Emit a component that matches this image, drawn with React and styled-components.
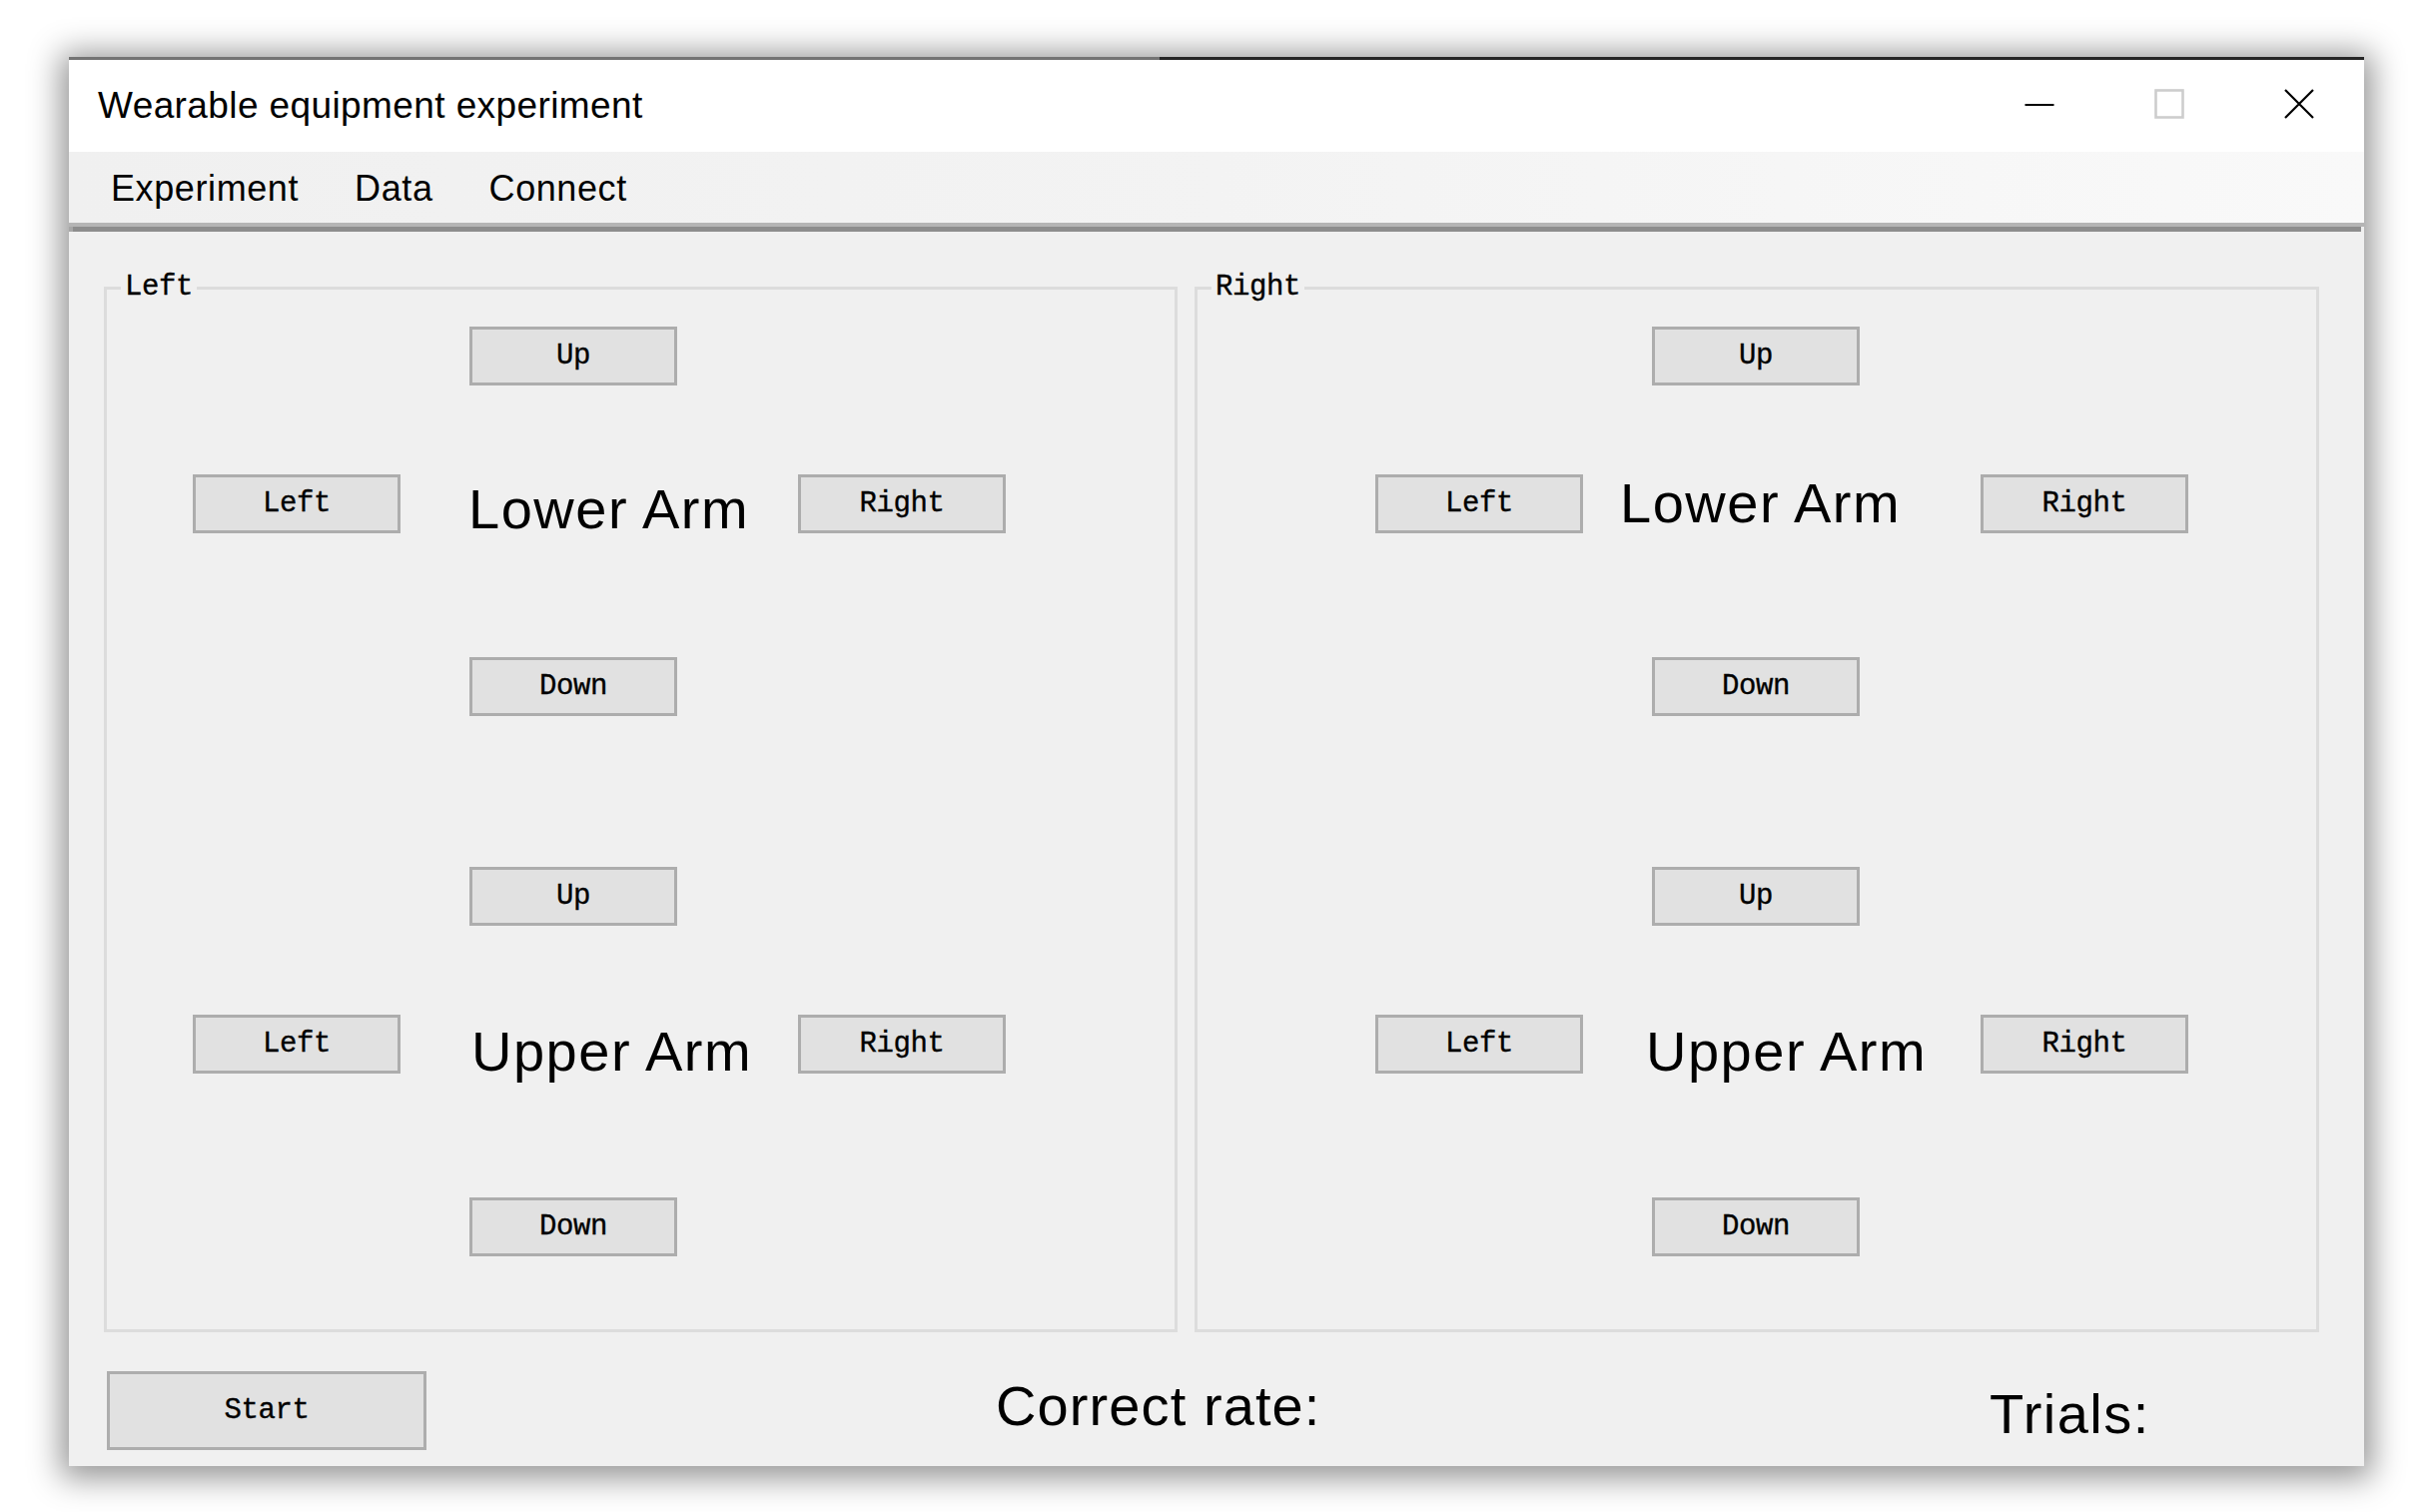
import React from "react";
import styled, { createGlobalStyle } from "styled-components";

const GlobalStyle = createGlobalStyle`
  html, body {
    margin: 0;
    padding: 0;
    background: #ffffff;
    overflow: hidden;
  }
  body {
    width: 2426px;
    height: 1514px;
    font-family: "Liberation Sans", Arial, sans-serif;
  }
  *, *::before, *::after { box-sizing: border-box; }
`;

const UI_FONT = `"Liberation Sans", Arial, sans-serif`;
const DIALOG_FONT = `"Liberation Mono", "Courier New", monospace`;

const Desk = styled.div`
  padding: 57px 0 0 69px;
`;

const Window = styled.div`
  width: 2298px;
  height: 1411px;
  display: flex;
  flex-direction: column;
  background: #f0f0f0;
  box-shadow: 0 4px 30px 8px rgba(0, 0, 0, 0.42);
`;

/* active-frame top edge: lighter on the left, dark on the right */
const FrameEdge = styled.div`
  height: 3px;
  background: linear-gradient(to right, #737373 0 47.5%, #262626 47.5% 100%);
`;

const TitleBar = styled.div`
  height: 92px;
  display: flex;
  align-items: center;
  background: #ffffff;
  padding-left: 29px;
`;

const Title = styled.span`
  font-family: ${UI_FONT};
  font-size: 37px;
  letter-spacing: 0.4px;
  color: #000;
  white-space: nowrap;
`;

const Controls = styled.div`
  margin-left: auto;
  align-self: stretch;
  display: flex;
  padding-bottom: 5px;
`;

const CtrlButton = styled.div`
  width: 130px;
  display: flex;
  align-items: center;
  justify-content: center;
`;

const MenuBar = styled.div`
  height: 75px;
  display: flex;
  align-items: center;
  padding: 3px 0 0 14px;
  background: linear-gradient(to right, #f0f0f0 0%, #f3f3f3 50%, #f9f9f9 100%);
  border-bottom: 4px solid #b5b5b5;
`;

const MenuItem = styled.span`
  font-family: ${UI_FONT};
  font-size: 36px;
  letter-spacing: 0.6px;
  color: #000;
  padding: 0 28px;
`;

/* sunken edge of the client area under the menu */
const ClientEdge = styled.div`
  height: 5px;
  background: linear-gradient(
    to right,
    #a6a6a6 0 4px,
    #8d8d8d 4px calc(100% - 3px),
    #f0f0f0 calc(100% - 3px) 100%
  );
`;

const Client = styled.div`
  flex: 1;
  display: flex;
  flex-direction: column;
  padding: 40px 0 0 35px;
  background: #f0f0f0;
`;

const Groups = styled.div`
  display: flex;
  gap: 17px;
`;

const GroupBox = styled.fieldset`
  width: ${(p) => p.$width}px;
  height: 1062px;
  margin: 0;
  min-width: 0;
  padding: 23px 0 0 0;
  border: 3px solid #dcdcdc;
`;

const Legend = styled.legend`
  margin-left: 14px;
  padding: 0 4px;
  font-family: ${DIALOG_FONT};
  font-size: 29px;
  letter-spacing: -0.4px;
  line-height: 32px;
  color: #000;
  -webkit-text-stroke: 0.35px #000;
`;

const Pad = styled.div`
  display: grid;
  grid-template-columns: 208px 398px 208px;
  grid-template-rows: 59px 89px 59px 124px 59px;
  grid-template-areas:
    ".    up    ."
    ".    .     ."
    "left label right"
    ".    .     ."
    ".    down  .";
  margin-left: ${(p) => p.$indent}px;
  margin-top: ${(p) => p.$top || 0}px;
`;

const WinButton = styled.button`
  grid-area: ${(p) => p.$area || "auto"};
  width: ${(p) => p.$w || 208}px;
  height: ${(p) => p.$h || 59}px;
  margin: 0 0 0 ${(p) => p.$offset || 0}px;
  padding: 0;
  border: 3px solid #adadad;
  background: #e1e1e1;
  font-family: ${DIALOG_FONT};
  font-size: 29px;
  letter-spacing: -0.4px;
  color: #000;
  -webkit-text-stroke: 0.35px #000;
  cursor: default;
  white-space: nowrap;
`;

const PartLabel = styled.div`
  grid-area: label;
  align-self: center;
  margin-left: ${(p) => p.$indent}px;
  transform: translateY(${(p) => p.$shift}px);
  font-family: ${UI_FONT};
  font-size: 56px;
  line-height: 56px;
  letter-spacing: 1.5px;
  color: #000;
  white-space: nowrap;
`;

const BottomBar = styled.div`
  display: grid;
  grid-template-columns: 890px 995px auto;
  align-items: start;
  margin-top: 39px;
  padding-left: 3px;
`;

const Readout = styled.div`
  margin-top: ${(p) => p.$drop}px;
  font-family: ${UI_FONT};
  font-size: 56px;
  line-height: 64px;
  letter-spacing: ${(p) => p.$track}px;
  color: #000;
  white-space: nowrap;
`;

const MinimizeGlyph = () => (
  <svg width="30" height="30" viewBox="0 0 30 30">
    <path d="M0.5 16H29.5" stroke="#000" strokeWidth="2" />
  </svg>
);

const MaximizeGlyph = () => (
  <svg width="30" height="30" viewBox="0 0 30 30">
    <rect x="1.5" y="1.5" width="27" height="27" fill="none" stroke="#cdcdcd" strokeWidth="2.6" />
  </svg>
);

const CloseGlyph = () => (
  <svg width="30" height="30" viewBox="0 0 30 30">
    <path d="M1 1L29 29M29 1L1 29" stroke="#000" strokeWidth="2.2" />
  </svg>
);

function DirectionPad({ part, indent, top, labelIndent, labelShift }) {
  return (
    <Pad $indent={indent} $top={top}>
      <WinButton $area="up" $offset={69}>Up</WinButton>
      <WinButton $area="left">Left</WinButton>
      <PartLabel $indent={labelIndent} $shift={labelShift}>{part}</PartLabel>
      <WinButton $area="right">Right</WinButton>
      <WinButton $area="down" $offset={69}>Down</WinButton>
    </Pad>
  );
}

const sides = [
  {
    name: "Left",
    width: 1075,
    indent: 86,
    lower: { indent: 68, shift: 5 },
    upper: { indent: 71, shift: 7 },
  },
  {
    name: "Right",
    width: 1126,
    indent: 178,
    lower: { indent: 37, shift: -1 },
    upper: { indent: 63, shift: 7 },
  },
];

export default function App() {
  return (
    <>
      <GlobalStyle />
      <Desk>
        <Window>
          <FrameEdge />
          <TitleBar>
            <Title>Wearable equipment experiment</Title>
            <Controls>
              <CtrlButton><MinimizeGlyph /></CtrlButton>
              <CtrlButton><MaximizeGlyph /></CtrlButton>
              <CtrlButton><CloseGlyph /></CtrlButton>
            </Controls>
          </TitleBar>
          <MenuBar>
            <MenuItem>Experiment</MenuItem>
            <MenuItem>Data</MenuItem>
            <MenuItem>Connect</MenuItem>
          </MenuBar>
          <ClientEdge />
          <Client>
            <Groups>
              {sides.map((s) => (
                <GroupBox key={s.name} $width={s.width}>
                  <Legend>{s.name}</Legend>
                  <DirectionPad
                    part="Lower Arm"
                    indent={s.indent}
                    labelIndent={s.lower.indent}
                    labelShift={s.lower.shift}
                  />
                  <DirectionPad
                    part="Upper Arm"
                    indent={s.indent}
                    top={151}
                    labelIndent={s.upper.indent}
                    labelShift={s.upper.shift}
                  />
                </GroupBox>
              ))}
            </Groups>
            <BottomBar>
              <WinButton $w={320} $h={79}>Start</WinButton>
              <Readout $drop={3} $track={1.1}>Correct rate:</Readout>
              <Readout $drop={11} $track={1.5}>Trials:</Readout>
            </BottomBar>
          </Client>
        </Window>
      </Desk>
    </>
  );
}
